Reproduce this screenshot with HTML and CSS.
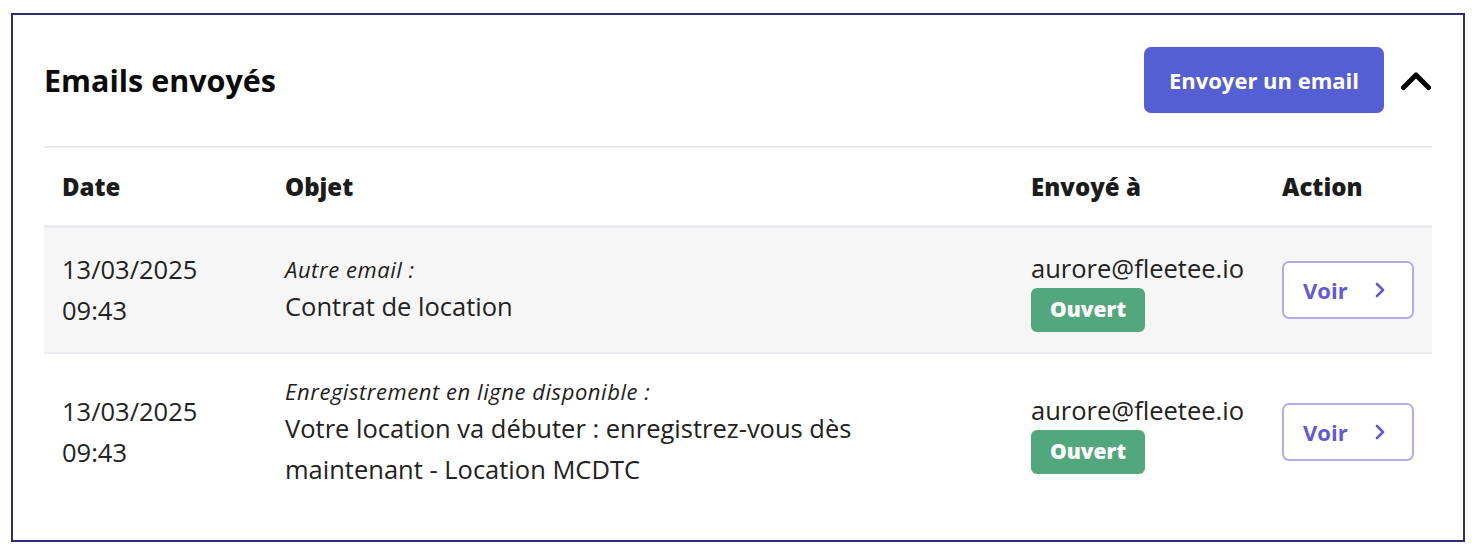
FILE: index.html
```html
<!DOCTYPE html>
<html lang="fr">
<head>
<meta charset="utf-8">
<title>Emails envoyés</title>
<link rel="stylesheet" href="styles.css">
</head>
<body>
<section class="card">
  <header class="card-head">
    <h2 class="card-title">Emails envoyés</h2>
    <div class="head-actions">
      <button class="btn-primary" type="button">Envoyer un email</button>
      <button class="btn-collapse" type="button" aria-label="Replier">
        <svg width="32" height="21" viewBox="0 0 32 21"><path d="M3.5 17.5 L16 5 L28.5 17.5" fill="none" stroke="#000" stroke-width="5" stroke-linecap="round" stroke-linejoin="round"/></svg>
      </button>
    </div>
  </header>
  <table class="emails">
    <colgroup>
      <col class="c-date"><col class="c-obj"><col class="c-to"><col class="c-act">
    </colgroup>
    <thead>
      <tr><th>Date</th><th>Objet</th><th>Envoyé à</th><th>Action</th></tr>
    </thead>
    <tbody>
      <tr class="alt">
        <td class="date">13/03/2025<br>09:43</td>
        <td><div class="obj-type">Autre email :</div><div class="obj-title">Contrat de location</div></td>
        <td><div class="to">aurore@fleetee.io</div><span class="badge">Ouvert</span></td>
        <td><button class="btn-voir" type="button">Voir<svg width="12" height="18" viewBox="0 0 12 18"><path d="M3 3 L9 9 L3 15" fill="none" stroke="currentColor" stroke-width="2.6" stroke-linecap="round" stroke-linejoin="round"/></svg></button></td>
      </tr>
      <tr>
        <td class="date">13/03/2025<br>09:43</td>
        <td><div class="obj-type">Enregistrement en ligne disponible :</div><div class="obj-title">Votre location va débuter : enregistrez-vous dès<br>maintenant - Location MCDTC</div></td>
        <td><div class="to">aurore@fleetee.io</div><span class="badge">Ouvert</span></td>
        <td><button class="btn-voir" type="button">Voir<svg width="12" height="18" viewBox="0 0 12 18"><path d="M3 3 L9 9 L3 15" fill="none" stroke="currentColor" stroke-width="2.6" stroke-linecap="round" stroke-linejoin="round"/></svg></button></td>
      </tr>
    </tbody>
  </table>
</section>
</body>
</html>
```
FILE: styles.css
```css
* { box-sizing: border-box; }
html, body { margin: 0; background: #fff; }
body {
  padding: 13px 15px 0 11px;
  font-family: "Open Sans", "Liberation Sans", sans-serif;
  color: #1f1f1f;
}
.card {
  border: 2px solid #2f2b7a;
  padding: 32px 31px 32px 31px;
  height: 529px;
}
.card-head {
  display: flex;
  align-items: center;
  justify-content: space-between;
  height: 66px;
  margin-bottom: 33px;
}
.card-title {
  margin: 0;
  font-size: 30.5px;
  font-weight: 700;
  color: #0b0b0b;
}
.head-actions { display: flex; align-items: center; gap: 16px; }
.btn-primary {
  height: 66px;
  width: 240px;
  border: 0;
  border-radius: 7px;
  background: #565ed3;
  color: #fff;
  font-family: inherit;
  font-size: 22px;
  font-weight: 700;
  cursor: pointer;
}
.btn-collapse {
  border: 0; background: none; padding: 0; width: 32px; height: 21px;
  display: flex; align-items: center; justify-content: center; cursor: pointer;
}
.emails {
  width: 100%;
  border-collapse: collapse;
  table-layout: fixed;
  border-top: 2px solid #ebebef;
}
.c-date { width: 223px; }
.c-obj { width: 746px; }
.c-to { width: 251px; }
.c-act { width: 168px; }
.emails th {
  text-align: left;
  font-size: 24px;
  font-weight: 800;
  color: #1c1c1c;
  height: 79px;
  padding: 0 18px;
  border-bottom: 3px solid #ebebef;
}
.emails td {
  padding: 20px 18px;
  vertical-align: middle;
  font-size: 25.5px;
  line-height: 41px;
  color: #222;
}
.emails tr.alt td { background: #f6f6f6; border-bottom: 2px solid #ebebef; }
.obj-type {
  font-style: italic;
  font-size: 22px;
  letter-spacing: 0.55px;
  line-height: 34px;
  color: #1e1e1e;
}
.obj-title { line-height: 41px; }
.to { line-height: 41px; }
.badge {
  display: inline-flex;
  align-items: center;
  justify-content: center;
  height: 44px;
  width: 114px;
  margin-top: -1px;
  border-radius: 6px;
  background: #52a77c;
  color: #fff;
  font-size: 21px;
  font-weight: 800;
  line-height: 1;
  vertical-align: top;
}
.btn-voir {
  display: flex;
  align-items: center;
  justify-content: space-between;
  width: 132px;
  height: 58px;
  padding: 0 26px 0 19px;
  border: 2px solid #b2acef;
  border-radius: 7px;
  background: #fff;
  color: #6258d8;
  font-family: inherit;
  font-size: 22px;
  font-weight: 700;
  cursor: pointer;
}
```
